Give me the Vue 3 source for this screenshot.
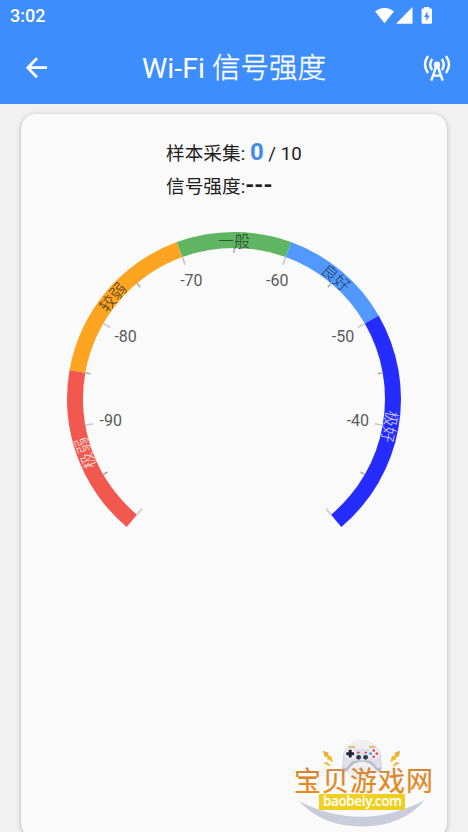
<script setup>
const CX = 234
const CY = 286
const OUTER = 167
const INNER = 151

const polar = (r, deg) => {
  const a = (deg * Math.PI) / 180
  return [CX + r * Math.sin(a), CY - r * Math.cos(a)]
}

const ring = (from, to) => {
  const large = to - from > 180 ? 1 : 0
  const [x1, y1] = polar(OUTER, from)
  const [x2, y2] = polar(OUTER, to)
  const [x3, y3] = polar(INNER, to)
  const [x4, y4] = polar(INNER, from)
  return `M${x1} ${y1}A${OUTER} ${OUTER} 0 ${large} 1 ${x2} ${y2}L${x3} ${y3}A${INNER} ${INNER} 0 ${large} 0 ${x4} ${y4}Z`
}

const segments = [
  { name: '极弱', from: -140, to: -80, color: '#f1594f', ink: '#fbe3e2' },
  { name: '较弱', from: -80, to: -20, color: '#fda421', ink: '#40321c' },
  { name: '一般', from: -20, to: 20, color: '#60b563', ink: '#26402a' },
  { name: '良好', from: 20, to: 60, color: '#5299ff', ink: '#22395c' },
  { name: '极好', from: 60, to: 140, color: '#242cff', ink: '#dcdeff' },
].map((s) => {
  const mid = (s.from + s.to) / 2
  const [x, y] = polar(158, mid)
  return { ...s, path: ring(s.from, s.to), transform: `translate(${x} ${y}) rotate(${mid})` }
})

const ticks = Array.from({ length: 15 }, (_, i) => {
  const deg = -140 + i * 20
  const major = i % 2 === 0
  const [x1, y1] = polar(INNER, deg)
  const [x2, y2] = polar(major ? 143 : 146, deg)
  return { x1, y1, x2, y2, major }
})

const labels = [-90, -80, -70, -60, -50, -40].map((value) => {
  const [x, y] = polar(125.5, (value + 65) * 4)
  return { value, x, y }
})
</script>

<template>
  <div class="screen">
    <header class="top">
      <div class="status">
        <span class="clock">3:02</span>
        <svg class="status-icons" width="60" height="20" viewBox="0 0 60 20">
          <path d="M0 4.3Q9.5-3 19 4.3L9.5 16.3Z" />
          <path d="M37.5 0V16.7H21Z" />
          <path d="M49.3 0H54.3V1.6H56Q57 1.6 57 2.6V15.7Q57 16.7 56 16.7H47.6Q46.6 16.7 46.6 15.7V2.6Q46.6 1.6 47.6 1.6H49.3Z" />
          <path class="bolt" d="M52.5 4.2L49 10H51.3V14L54.8 8.4H52.5Z" />
        </svg>
      </div>
      <div class="bar">
        <svg class="back" width="24" height="24" viewBox="0 0 24 24">
          <path d="M24 11.7H5.2M14 2.2L4.7 11.7L14 21.2" />
        </svg>
        <h1>Wi-Fi <span>信号强度</span></h1>
        <svg class="antenna" width="28" height="28" viewBox="0 0 28 28">
          <circle cx="14" cy="10.7" r="3.2" />
          <path class="wave" d="M9.2 5Q5.2 10.5 9.2 16M18.8 5Q22.8 10.5 18.8 16M5 2Q-1 10.5 5 19M23 2Q29 10.5 23 19" />
          <path class="mast" d="M13.7 11L8.3 26.7M14.3 11L19.7 26.7M10.3 21.6H17.7" />
        </svg>
      </div>
    </header>

    <main class="card">
      <div class="stats">
        <p>样本采集: <b class="count">0</b> / 10</p>
        <p>信号强度:<b class="dash">---</b></p>
      </div>
      <svg class="gauge" width="426" height="340" viewBox="21 100 426 340">
        <path v-for="s in segments" :key="s.name" :d="s.path" :fill="s.color" />
        <line
          v-for="(t, i) in ticks" :key="i"
          :x1="t.x1" :y1="t.y1" :x2="t.x2" :y2="t.y2"
          :class="t.major ? 'major' : 'minor'"
        />
        <text
          v-for="s in segments" :key="s.name" class="zone"
          :transform="s.transform" :fill="s.ink" y="5.6"
        >{{ s.name }}</text>
        <text v-for="l in labels" :key="l.value" class="num" :x="l.x + 0.3" :y="l.y + 5.4">{{ l.value }}</text>
      </svg>

      <div class="brand">
        <svg width="150" height="98" viewBox="290 734 150 98">
          <defs>
            <linearGradient id="gold" x1="0" y1="0" x2="0" y2="1">
              <stop offset="0" stop-color="#d08536" />
              <stop offset="1" stop-color="#f08a10" />
            </linearGradient>
            <linearGradient id="bolt" x1="0" y1="0" x2="0" y2="1">
              <stop offset="0" stop-color="#e9a63a" />
              <stop offset="1" stop-color="#f5c81e" />
            </linearGradient>
          </defs>
          <circle cx="362" cy="759.5" r="20" fill="#efeff0" />
          <path d="M299 801Q361 833 425 800Q402 826.5 362 826.5Q322 826.5 299 801Z" fill="#c9ccda" />
          <path d="M344 752Q342.5 762 342.5 768Q343 774 348 770Q354 761.5 362 761.5Q370 761.5 376 770Q381 774 381.5 768Q381.5 762 380 752Z" fill="#b9bccb" />
          <path d="M350 747.3Q343.5 747.3 343.5 754L343 766Q344 770 347.5 767Q352 760 356 760.5H368Q372 760 376.5 767Q380 770 381 766L380.5 754Q380.5 747.3 374 747.3Q370.5 747.5 369 749H355Q353.5 747.5 350 747.3Z" fill="#dfe1ea" />
          <circle cx="350.2" cy="753.7" r="5.3" fill="#f1f2f7" />
          <circle cx="373.7" cy="753.7" r="5.3" fill="#f1f2f7" />
          <path d="M348.5 746.8H355M369 746.8H375.5" stroke="#e8bd59" stroke-width="1.7" />
          <path d="M350.2 749.8V757.6M346.3 753.7H354.1" stroke="#20243a" stroke-width="3" />
          <path d="M357 752.6H359.6M364.5 752.6H367.1" stroke="#d95063" stroke-width="1.6" />
          <circle cx="358.6" cy="757.3" r="2.4" fill="#303852" />
          <circle cx="365.6" cy="757.3" r="2.4" fill="#303852" />
          <circle cx="373.7" cy="750.6" r="1.4" fill="#df4b60" />
          <circle cx="373.7" cy="756.8" r="1.4" fill="#df4b60" />
          <circle cx="370.6" cy="753.7" r="1.4" fill="#3d9fc2" />
          <circle cx="376.8" cy="753.7" r="1.4" fill="#df4b60" />
          <g fill="url(#bolt)">
            <path d="M323 750.8L328.3 752.6L328.5 755.8L331.3 756.3L333.3 762.3L326.5 758.8L328 757.6L324.5 756.6Z" />
            <path d="M322.5 763L327.5 762.2L328.5 763.6L331.5 766L326.5 765.4L327 764.4Z" />
            <path d="M400.3 750.8L395 752.6L394.8 755.8L392 756.3L390 762.3L396.8 758.8L395.3 757.6L398.8 756.6Z" />
            <path d="M400.8 763L395.8 762.2L394.8 763.6L391.8 766L396.8 765.4L396.3 764.4Z" />
          </g>
          <text class="brand-name" x="294" y="791" textLength="139" fill="url(#gold)" stroke="url(#gold)">宝贝游戏网</text>
          <rect x="319" y="794" width="86" height="16" fill="#efcf22" />
          <text class="brand-url" x="323" y="806.3" textLength="79">baobeiy.com</text>
        </svg>
      </div>
    </main>
  </div>
</template>

<style>
body {
  margin: 0;
  overflow: hidden;
  background: #f1f1f1;
}
</style>

<style scoped>
.screen {
  width: 468px;
  height: 832px;
  overflow: hidden;
  display: flex;
  flex-direction: column;
  background: #f1f1f1;
  font-family: Roboto, "Noto Sans CJK SC", sans-serif;
}

.top {
  height: 104px;
  flex: none;
  background: #3d8dff;
  color: #fff;
}

.status {
  height: 32px;
  display: flex;
  justify-content: space-between;
  align-items: center;
  padding: 0 33px 0 10px;
  box-sizing: border-box;
}

.clock {
  font-size: 18px;
  font-weight: 500;
  line-height: 32px;
}

.status-icons {
  fill: #fff;
  margin-top: 1px;
}

.status-icons .bolt {
  fill: #3d8dff;
}

.bar {
  height: 72px;
  display: flex;
  align-items: center;
  justify-content: space-between;
  padding: 0 17px 0 23px;
}

.back {
  fill: none;
  stroke: #fff;
  stroke-width: 2.7;
}

h1 {
  margin: 1px 2px 0 0;
  font-size: 28.5px;
  font-weight: 400;
  line-height: 40px;
}

h1 span {
  font-weight: 300;
  -webkit-text-stroke: 0.4px #fff;
}

.antenna {
  fill: #fff;
}

.antenna .wave,
.antenna .mast {
  fill: none;
  stroke: #fff;
  stroke-width: 2.4;
}

.card {
  width: 426px;
  height: 724px;
  flex: none;
  margin: 10px auto 0;
  display: flex;
  flex-direction: column;
  border-radius: 15px;
  background: #fafafa;
  box-shadow: 0 1px 5px rgba(0, 0, 0, 0.26);
}

.stats {
  width: 138px;
  padding-top: 21px;
  margin-left: 145px;
  height: 78px;
  color: #212121;
  font-size: 18.7px;
}

.stats p {
  margin: 0;
  height: 34px;
  line-height: 34px;
  white-space: nowrap;
}

.count {
  color: #4489ee;
  font-size: 24px;
}

.dash {
  font-size: 23px;
}

.gauge {
  flex: none;
}

.major {
  stroke: #cbcbcb;
  stroke-width: 1.7;
}

.minor {
  stroke: #aaa;
  stroke-width: 1.5;
}

.zone {
  font-size: 16px;
  font-weight: 300;
  text-anchor: middle;
}

.num {
  font-size: 16px;
  fill: #5a5a5a;
  text-anchor: middle;
}

.brand {
  display: flex;
  margin: auto 0 6px 269px;
}

.brand-name {
  font-size: 27px;
  font-weight: 400;
  stroke-width: 0.2;
}

.brand-url {
  font-family: "Noto Sans", sans-serif;
  font-size: 13.5px;
  font-weight: 600;
  fill: #fffef0;
}
</style>
